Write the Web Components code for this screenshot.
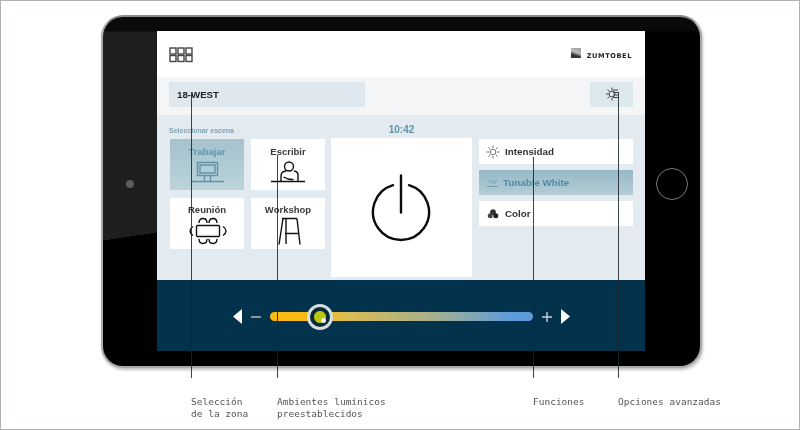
<!DOCTYPE html>
<html lang="es">
<head>
<meta charset="utf-8">
<title>Zumtobel panel</title>
<style>
  html, body { margin: 0; padding: 0; background: #fff; }
  body { width: 800px; height: 430px; overflow: hidden; font-family: "Liberation Sans", Arial, sans-serif; }
  svg { display: block; }
</style>
</head>
<body>
<manual-page>
  <tablet-frame>
    <panel-header></panel-header>
    <zone-bar></zone-bar>
    <control-area>
      <scene-tile slot="scenes" label="Trabajar" active>
        <svg width="40" height="28" viewBox="0 0 40 28" fill="none" stroke="#5f93a8" stroke-width="1.4">
          <rect x="10.5" y="3.5" width="20" height="13"/><rect x="13" y="6" width="15" height="8"/>
          <path d="M17.5 17v5M23.5 17v5M4 22.5h33"/>
        </svg>
      </scene-tile>
      <scene-tile slot="scenes" label="Escribir">
        <svg width="40" height="28" viewBox="0 0 40 28" fill="none" stroke="#111" stroke-width="1.4">
          <circle cx="21" cy="7.5" r="4.5"/>
          <path d="M13 22v-5q0-4.500 5-5M30 22v-6q0-3.500-4-4M15.500 18q5 3 10 2.500M3 22.500h34"/>
        </svg>
      </scene-tile>
      <scene-tile slot="scenes" label="Reunión" low>
        <svg width="40" height="32" viewBox="0 0 40 32" fill="none" stroke="#111" stroke-width="1.4">
          <rect x="9.500" y="10.500" width="23" height="11" rx="1"/>
          <path d="M12 8q0-4.500 4-4.500t4 4.500M22 8q0-4.500 4-4.500t4 4.500M12 24q0 4.500 4 4.500t4-4.500M22 24q0 4.500 4 4.500t4-4.500M6 11.500q-3 2-3 4.500t3 4.500M36 11.500q3 2 3 4.500t-3 4.500"/>
        </svg>
      </scene-tile>
      <scene-tile slot="scenes" label="Workshop" low>
        <svg width="40" height="32" viewBox="0 0 40 32" fill="none" stroke="#111" stroke-width="1.4">
          <path d="M14 3.500h15M15 3.500L11 29.500M29 3.500L32 29.500M18 4v25M17 18.500h13"/>
        </svg>
      </scene-tile>

      <svg slot="power" style="margin-left:-2px" width="60" height="70" viewBox="0 0 60 70" fill="none" stroke="#0b0b0b" stroke-width="2.400" stroke-linecap="round">
        <path d="M22 12.200a28 28 0 1 0 16 0M30 2.500v37"/>
      </svg>

      <function-row slot="functions" label="Intensidad">
        <svg slot="icon" width="14" height="14" viewBox="0 0 14 14" fill="none" stroke="#777" stroke-width="1">
          <circle cx="7" cy="7" r="2.800"/>
          <path d="M7 0.500v2.500M7 11v2.500M0.500 7h2.500M11 7h2.500M2.400 2.400l1.800 1.800M9.800 9.800l1.800 1.800M2.400 11.600l1.800-1.800M9.800 4.200l1.800-1.800"/>
        </svg>
      </function-row>
      <function-row slot="functions" label="Tunable White" active>
        <tw-mark slot="icon"></tw-mark>
      </function-row>
      <function-row slot="functions" label="Color">
        <svg slot="icon" width="14" height="14" viewBox="0 0 14 14" fill="#333">
          <circle cx="7" cy="5.200" r="2.900"/><circle cx="4.200" cy="8.800" r="2.500" fill="#444"/><circle cx="9.800" cy="8.800" r="2.500" fill="#222"/>
        </svg>
      </function-row>
    </control-area>
    <level-slider></level-slider>
  </tablet-frame>

  <callout-labels>
    <span style="width:86px">Selección<br>de la zona</span>
    <span style="width:256px">Ambientes lumínicos<br>preestablecidos</span>
    <span style="width:85px">Funciones</span>
    <span>Opciones avanzadas</span>
  </callout-labels>

  <leader-line slot="lines" x="191" top="93"></leader-line>
  <leader-line slot="lines" x="277" top="155"></leader-line>
  <leader-line slot="lines" x="533" top="157"></leader-line>
  <leader-line slot="lines" x="618" top="92"></leader-line>
</manual-page>

<script>
class ManualPage extends HTMLElement {
  constructor() {
    super();
    const shadow = this.attachShadow({ mode: 'open' });
    shadow.innerHTML = `
      <style>
        :host {
          display: flex;
          flex-direction: column;
          position: relative;
          box-sizing: border-box;
          width: 800px;
          height: 430px;
          padding: 14px 0 0 100px;
          border: 1px solid #aeb4b4;
          background: #fff;
          filter: blur(0.5px);
        }
      </style>
      <slot></slot>
      <slot name="lines"></slot>
    `;
  }
}

class TabletFrame extends HTMLElement {
  constructor() {
    super();
    const shadow = this.attachShadow({ mode: 'open' });
    shadow.innerHTML = `
      <style>
        :host {
          display: flex;
          box-sizing: border-box;
          width: 601px;
          height: 353px;
          border: 2px solid #a9a9a9;
          border-top-color: #8c8c8c;
          border-radius: 22px;
          box-shadow: 1px 2px 3px rgba(0,0,0,.25);
          background:
            linear-gradient(180deg, #0a0a0a 14px, rgba(0,0,0,0) 15px) no-repeat,
            linear-gradient(90deg, rgba(0,0,0,0) 54px, #000 55px) no-repeat,
            linear-gradient(171.5deg, #1e1e1e 0, #1e1e1e 51%, #000 51%);
          background-color: #000;
        }
        .side {
          display: flex;
          align-items: center;
          justify-content: center;
          padding-bottom: 16px;
          box-sizing: border-box;
        }
        .left { width: 54px; }
        .right { width: 55px; }
        .camera { width: 8px; height: 8px; border-radius: 50%; background: #5c5c5c; }
        .home { width: 30px; height: 30px; border-radius: 50%; border: 1.5px solid #7c7c7c; margin-left: -1px; }
        .screen {
          flex: 1;
          display: flex;
          flex-direction: column;
          margin: 14px 0 15px;
          background: #e3eaf0;
        }
      </style>
      <div class="side left"><div class="camera"></div></div>
      <div class="screen"><slot></slot></div>
      <div class="side right"><div class="home"></div></div>
    `;
  }
}

class PanelHeader extends HTMLElement {
  constructor() {
    super();
    const shadow = this.attachShadow({ mode: 'open' });
    shadow.innerHTML = `
      <style>
        :host {
          display: flex;
          align-items: center;
          justify-content: space-between;
          box-sizing: border-box;
          height: 46px;
          padding: 2px 13px 0 12px;
          background: #fff;
        }
        .logo { display: flex; align-items: center; gap: 6px; margin-top: -1px; }
        .mark { width: 10px; height: 10px; margin-top: -3px; background: linear-gradient(20deg, #333 0 30%, #bbb 55%, #999); }
        .name { font: bold 6.6px "DejaVu Sans", sans-serif; letter-spacing: .6px; color: #222; margin-top: 2px; }
      </style>
      <svg width="24" height="16" viewBox="0 0 24 16" fill="none" stroke="#444" stroke-width="1.400">
        <rect x="1" y="1" width="6" height="6"/><rect x="9" y="1" width="6" height="6"/><rect x="17" y="1" width="6" height="6"/>
        <rect x="1" y="8.500" width="6" height="6"/><rect x="9" y="8.500" width="6" height="6"/><rect x="17" y="8.500" width="6" height="6"/>
      </svg>
      <div class="logo"><div class="mark"></div><div class="name">ZUMTOBEL</div></div>
    `;
  }
}

class ZoneBar extends HTMLElement {
  constructor() {
    super();
    const shadow = this.attachShadow({ mode: 'open' });
    shadow.innerHTML = `
      <style>
        :host {
          display: flex;
          align-items: center;
          justify-content: space-between;
          box-sizing: border-box;
          height: 38px;
          padding: 0 12px 4px;
          background: #f4f5f6;
        }
        .zone {
          display: flex;
          align-items: center;
          box-sizing: border-box;
          width: 196px;
          height: 25px;
          padding-left: 8px;
          background: #dfe8ee;
          font: bold 9.7px "Liberation Sans", Arial, sans-serif;
          color: #222;
        }
        .advanced {
          display: flex;
          align-items: center;
          justify-content: center;
          width: 43px;
          height: 25px;
          background: #dde8ed;
        }
      </style>
      <div class="zone">18-WEST</div>
      <div class="advanced">
        <svg width="14" height="14" viewBox="0 0 14 14" fill="none" stroke="#444" stroke-width="1">
          <circle cx="7" cy="7" r="3"/>
          <path d="M7 .5v2.500M7 11v2.500M1 7h2.500M2.500 2.500l1.800 1.800M2.500 11.500l1.800-1.800M8 3h5M8 5.500h5M8 8h5M8 10.500h5"/>
        </svg>
      </div>
    `;
  }
}

class ControlArea extends HTMLElement {
  constructor() {
    super();
    const shadow = this.attachShadow({ mode: 'open' });
    shadow.innerHTML = `
      <style>
        :host {
          display: grid;
          grid-template-columns: 155px 141px 155px;
          grid-template-rows: 14px 139px;
          column-gap: 6px;
          box-sizing: border-box;
          height: 165px;
          padding: 9px 0 3px 13px;
          background: #e3eaf0;
        }
        .caption { font: bold 7px "Liberation Sans", Arial, sans-serif; color: #7fa3b2; margin-left: -1px; padding-top: 3px; }
        .time { font: bold 10px "Liberation Sans", Arial, sans-serif; color: #5f95ad; text-align: center; }
        .scenes {
          grid-row: 2;
          display: grid;
          grid-template-columns: 74px 74px;
          grid-auto-rows: 51px;
          gap: 8px 7px;
          padding-top: 1px;
          align-content: start;
        }
        .power {
          grid-row: 2;
          display: flex;
          align-items: center;
          justify-content: center;
          background: #fff;
        }
        .functions {
          grid-row: 2;
          margin-left: 1px;
          padding-top: 1px;
          display: flex;
          flex-direction: column;
          gap: 6px;
        }
      </style>
      <div class="caption">Seleccionar escena</div>
      <div class="time">10:42</div>
      <div></div>
      <div class="scenes"><slot name="scenes"></slot></div>
      <div class="power"><slot name="power"></slot></div>
      <div class="functions"><slot name="functions"></slot></div>
    `;
  }
}

class SceneTile extends HTMLElement {
  constructor() {
    super();
    const shadow = this.attachShadow({ mode: 'open' });
    shadow.innerHTML = `
      <style>
        :host {
          display: flex;
          flex-direction: column;
          align-items: center;
          background: #fff;
          padding-top: 7px;
          box-sizing: border-box;
          font: bold 9.500px "Liberation Sans", Arial, sans-serif;
          color: #3a3a3a;
        }
        :host([active]) {
          background: linear-gradient(#a5c2cd, #bcd3da);
          color: #5f93aa;
        }
        .label { height: 13px; line-height: 11px; }
        :host([low]) { padding-top: 6px; }
        :host([low]) ::slotted(svg) { margin-top: -2px; }
      </style>
      <div class="label"></div>
      <slot></slot>
    `;
    shadow.querySelector('.label').textContent = this.getAttribute('label');
  }
}

class FunctionRow extends HTMLElement {
  constructor() {
    super();
    const shadow = this.attachShadow({ mode: 'open' });
    shadow.innerHTML = `
      <style>
        :host {
          display: flex;
          align-items: center;
          gap: 5px;
          box-sizing: border-box;
          height: 25px;
          padding-left: 7px;
          background: #fff;
          font: bold 9.800px "Liberation Sans", Arial, sans-serif;
          color: #333;
        }
        :host([active]) {
          background: linear-gradient(#97b8c6, #b4cdd7);
          color: #4f8aa5;
        }
      </style>
      <slot name="icon"></slot>
      <span></span>
    `;
    shadow.querySelector('span').textContent = this.getAttribute('label');
  }
}

class TwMark extends HTMLElement {
  constructor() {
    super();
    const shadow = this.attachShadow({ mode: 'open' });
    shadow.innerHTML = `
      <style>
        :host {
          display: block;
          box-sizing: border-box;
          width: 11px;
          margin-left: 1px;
          border-bottom: 1px solid #6f9cb1;
          font: 5.500px/7px "Liberation Sans", Arial, sans-serif;
          text-align: center;
          color: #6f9cb1;
        }
      </style>
      TW
    `;
  }
}

class LevelSlider extends HTMLElement {
  constructor() {
    super();
    const shadow = this.attachShadow({ mode: 'open' });
    shadow.innerHTML = `
      <style>
        :host {
          display: flex;
          align-items: center;
          justify-content: center;
          box-sizing: border-box;
          height: 71px;
          padding: 2px 0 0 1px;
          background: #03324c;
        }
        .sign { width: 10px; height: 10px; }
        .track {
          position: relative;
          width: 263px;
          height: 9px;
          margin: 0 9px;
          border-radius: 4.500px;
          background: linear-gradient(90deg, #fbb914 0, #f8bb18 19%, #d8bc55 30%, #a7b08e 62%, #5d9cdb 92%, #5d9cdb 100%);
        }
        .knob {
          position: absolute;
          left: 37px;
          top: -8.500px;
          box-sizing: border-box;
          width: 26px;
          height: 26px;
          border-radius: 50%;
          border: 3.500px solid #d3dde2;
          background: radial-gradient(circle, #b9c716 0 5.500px, #0c2a33 6.500px);
        }
        .dot {
          position: absolute;
          left: 11px;
          top: 11px;
          width: 5px;
          height: 5px;
          border-radius: 50%;
          background: #eef0ee;
        }
      </style>
      <svg width="9" height="15" viewBox="0 0 9 15" fill="#fff"><path d="M9 0v15L0 7.500z"/></svg>
      <svg class="sign" style="margin-left:9px" viewBox="0 0 10 10" stroke="#b9c4ca" stroke-width="1.400"><path d="M0 5h10"/></svg>
      <div class="track"><div class="knob"><div class="dot"></div></div></div>
      <svg class="sign" style="margin-right:9px" viewBox="0 0 10 10" stroke="#c9d2d7" stroke-width="1.400"><path d="M0 5h10M5 0v10"/></svg>
      <svg width="9" height="15" viewBox="0 0 9 15" fill="#fff"><path d="M0 0v15L9 7.500z"/></svg>
    `;
  }
}

class CalloutLabels extends HTMLElement {
  constructor() {
    super();
    const shadow = this.attachShadow({ mode: 'open' });
    shadow.innerHTML = `
      <style>
        :host {
          display: flex;
          margin: 28px 0 0 90px;
          font: 9.500px/12px "DejaVu Sans Mono", "Liberation Mono", monospace;
          color: #555;
          white-space: nowrap;
        }
        ::slotted(span) { display: block; }
      </style>
      <slot></slot>
    `;
  }
}

class LeaderLine extends HTMLElement {
  constructor() {
    super();
    const shadow = this.attachShadow({ mode: 'open' });
    shadow.innerHTML = `
      <style>
        :host {
          position: absolute;
          width: 1px;
          background: rgba(25,35,40,.85);
        }
      </style>
    `;
    // coordinates are page pixels, the host border shifts them by one
    const top = Number(this.getAttribute('top'));
    this.style.left = (Number(this.getAttribute('x')) - 1) + 'px';
    this.style.top = (top - 1) + 'px';
    this.style.height = (378 - top) + 'px';
  }
}

customElements.define('manual-page', ManualPage);
customElements.define('tablet-frame', TabletFrame);
customElements.define('panel-header', PanelHeader);
customElements.define('zone-bar', ZoneBar);
customElements.define('control-area', ControlArea);
customElements.define('scene-tile', SceneTile);
customElements.define('function-row', FunctionRow);
customElements.define('tw-mark', TwMark);
customElements.define('level-slider', LevelSlider);
customElements.define('callout-labels', CalloutLabels);
customElements.define('leader-line', LeaderLine);
</script>
</body>
</html>
